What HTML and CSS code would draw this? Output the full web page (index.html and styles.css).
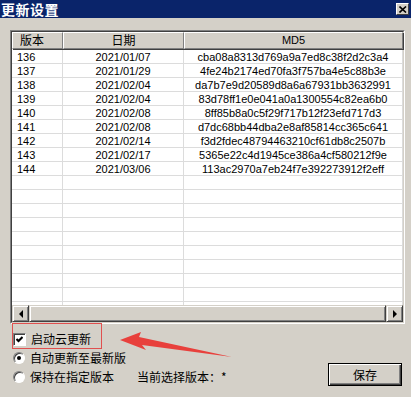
FILE: index.html
```html
<!DOCTYPE html>
<html lang="zh-CN">
<head>
  <meta charset="UTF-8" />
  <title>更新设置</title>
  <link rel="stylesheet" href="styles.css">
</head>
<body>
<div class="window">
  <div class="titlebar">
    <span class="title">更新设置</span>
    <span class="close-btn">
      <svg width="8" height="7" viewBox="0 0 8 7"><path d="M0.5 0.5 L7 6.5 M7 0.5 L0.5 6.5" stroke="#000" stroke-width="1.6"/></svg>
    </span>
  </div>

  <div class="client">
    <div class="listview">
      <div class="lv-inner">
        <div class="lv-header">
          <div class="hcell col-ver">版本</div>
          <div class="hcell col-date">日期</div>
          <div class="hcell col-md5">MD5</div>
        </div>
        <div class="lv-body">
          <div class="row"><div class="cell col-ver">136</div><div class="cell col-date">2021/01/07</div><div class="cell col-md5">cba08a8313d769a9a7ed8c38f2d2c3a4</div></div>
          <div class="row"><div class="cell col-ver">137</div><div class="cell col-date">2021/01/29</div><div class="cell col-md5">4fe24b2174ed70fa3f757ba4e5c88b3e</div></div>
          <div class="row"><div class="cell col-ver">138</div><div class="cell col-date">2021/02/04</div><div class="cell col-md5">da7b7e9d20589d8a6a67931bb3632991</div></div>
          <div class="row"><div class="cell col-ver">139</div><div class="cell col-date">2021/02/04</div><div class="cell col-md5">83d78ff1e0e041a0a1300554c82ea6b0</div></div>
          <div class="row"><div class="cell col-ver">140</div><div class="cell col-date">2021/02/08</div><div class="cell col-md5">8ff85b8a0c5f29f717b12f23efd717d3</div></div>
          <div class="row"><div class="cell col-ver">141</div><div class="cell col-date">2021/02/08</div><div class="cell col-md5">d7dc68bb44dba2e8af85814cc365c641</div></div>
          <div class="row"><div class="cell col-ver">142</div><div class="cell col-date">2021/02/14</div><div class="cell col-md5">f3d2fdec48794463210cf61db8c2507b</div></div>
          <div class="row"><div class="cell col-ver">143</div><div class="cell col-date">2021/02/17</div><div class="cell col-md5">5365e22c4d1945ce386a4cf580212f9e</div></div>
          <div class="row"><div class="cell col-ver">144</div><div class="cell col-date">2021/03/06</div><div class="cell col-md5">113ac2970a7eb24f7e392273912f2eff</div></div>
          <div class="row"><div class="cell col-ver"></div><div class="cell col-date"></div><div class="cell col-md5"></div></div>
          <div class="row"><div class="cell col-ver"></div><div class="cell col-date"></div><div class="cell col-md5"></div></div>
          <div class="row"><div class="cell col-ver"></div><div class="cell col-date"></div><div class="cell col-md5"></div></div>
          <div class="row"><div class="cell col-ver"></div><div class="cell col-date"></div><div class="cell col-md5"></div></div>
          <div class="row"><div class="cell col-ver"></div><div class="cell col-date"></div><div class="cell col-md5"></div></div>
          <div class="row"><div class="cell col-ver"></div><div class="cell col-date"></div><div class="cell col-md5"></div></div>
          <div class="row"><div class="cell col-ver"></div><div class="cell col-date"></div><div class="cell col-md5"></div></div>
          <div class="row"><div class="cell col-ver"></div><div class="cell col-date"></div><div class="cell col-md5"></div></div>
          <div class="row"><div class="cell col-ver"></div><div class="cell col-date"></div><div class="cell col-md5"></div></div>
          <div class="row"><div class="cell col-ver"></div><div class="cell col-date"></div><div class="cell col-md5"></div></div>
        </div>
        <div class="hscroll">
          <span class="sb-btn"><span class="tri-left"></span></span>
          <span class="sb-thumb"></span>
          <span class="sb-btn"><span class="tri-right"></span></span>
        </div>
      </div>
    </div>

    <div class="options">
      <div class="check-row">
        <span class="checkbox">
          <svg width="7" height="7" viewBox="0 0 7 7"><path d="M0.5 3 L2.5 5 L6.5 1" stroke="#000" stroke-width="2" fill="none"/></svg>
        </span>
        <span class="label">启动云更新</span>
      </div>
      <div class="bottom">
        <div class="radios">
          <div class="radio-row"><span class="radio on"></span><span class="label">自动更新至最新版</span></div>
          <div class="radio-row"><span class="radio"></span><span class="label">保持在指定版本</span><span class="current">当前选择版本：*</span></div>
        </div>
        <button class="save-btn">保存</button>
      </div>
    </div>

    <div class="mark-box"></div>
    <svg class="mark-arrow" width="411" height="397" viewBox="0 0 411 397">
      <polygon points="120,340 141,332 139,337 232,357 142,345 146,350" fill="#e8403c"/>
    </svg>
  </div>
</div>
</body>
</html>
```

FILE: styles.css
```css
body {
  margin: 0;
  padding: 0;
  background-color: #d4d0c8;
  font-family: "Noto Sans CJK SC", sans-serif;
  font-size: 12px;
  color: #000;
}
.window {
  width: 411px;
  height: 397px;
  overflow: hidden;
}
.titlebar {
  height: 18px;
  background-color: #0a246a;
  display: flex;
  align-items: center;
  padding: 0 2px 0 1px;
}
.title {
  color: #fff;
  font-weight: bold;
  font-size: 14px;
  line-height: 18px;
  letter-spacing: 0.5px;
}
.close-btn {
  margin-left: auto;
  width: 13px;
  height: 12px;
  box-sizing: border-box;
  background-color: #d4d0c8;
  border-top: 1px solid #fff;
  border-left: 1px solid #fff;
  border-right: 1px solid #404040;
  border-bottom: 1px solid #404040;
  display: flex;
  align-items: center;
  justify-content: center;
}
.client {
  padding: 12px 6px 0 10px;
}

/* list view */
.listview {
  width: 395px;
  height: 294px;
  box-sizing: border-box;
  border-top: 1px solid #808080;
  border-left: 1px solid #808080;
  border-right: 1px solid #fff;
  border-bottom: 1px solid #fff;
}
.lv-inner {
  height: 100%;
  box-sizing: border-box;
  border-top: 1px solid #404040;
  border-left: 1px solid #404040;
  border-right: 1px solid #d4d0c8;
  border-bottom: 1px solid #d4d0c8;
  display: flex;
  flex-direction: column;
  background-color: #fff;
}
.lv-header {
  display: flex;
  height: 17px;
  flex-shrink: 0;
}
.hcell {
  box-sizing: border-box;
  background-color: #d4d0c8;
  border-top: 1px solid #fff;
  border-left: 1px solid #fff;
  border-right: 1px solid #808080;
  border-bottom: 1px solid #808080;
  box-shadow: 1px 1px 0 #404040;
  font-size: 12px;
  line-height: 14px;
  text-align: center;
}
.hcell.col-ver {
  text-align: left;
  padding-left: 7px;
}
.hcell.col-md5 {
  font-family: "Liberation Sans", Arial, sans-serif;
  font-size: 11px;
}
.col-ver {
  width: 51px;
  flex-shrink: 0;
}
.col-date {
  width: 121px;
  flex-shrink: 0;
}
.col-md5 {
  flex: 1;
}
.lv-body {
  flex: 1;
  overflow: hidden;
  padding-top: 1px;
}
.row {
  display: flex;
  height: 14px;
}
.cell {
  box-sizing: border-box;
  height: 14px;
  border-right: 1px solid #dcdcdc;
  border-bottom: 1px solid #dcdcdc;
  font-family: "Liberation Sans", Arial, sans-serif;
  font-size: 11px;
  line-height: 14px;
  text-align: center;
  white-space: nowrap;
  overflow: hidden;
}
.cell.col-ver {
  text-align: left;
  padding-left: 5px;
}

/* scroll bar */
.hscroll {
  display: flex;
  height: 17px;
  flex-shrink: 0;
  background-color: #e8e6e0;
}
.sb-btn, .sb-thumb {
  box-sizing: border-box;
  height: 17px;
  background-color: #d4d0c8;
  border-top: 1px solid #d4d0c8;
  border-left: 1px solid #d4d0c8;
  border-right: 1px solid #404040;
  border-bottom: 1px solid #404040;
  box-shadow: inset 1px 1px 0 #fff, inset -1px -1px 0 #808080;
}
.sb-btn {
  width: 17px;
  display: flex;
  align-items: center;
  justify-content: center;
}
.sb-thumb {
  flex: 1;
}
.tri-left {
  width: 0;
  height: 0;
  border-top: 4px solid transparent;
  border-bottom: 4px solid transparent;
  border-right: 4px solid #000;
}
.tri-right {
  width: 0;
  height: 0;
  border-top: 4px solid transparent;
  border-bottom: 4px solid transparent;
  border-left: 4px solid #000;
}

/* options */
.options {
  padding-left: 3px;
  padding-right: 3px;
}
.check-row {
  display: flex;
  align-items: center;
  height: 18px;
  margin-top: 6px;
}
.checkbox {
  width: 13px;
  height: 13px;
  box-sizing: border-box;
  background-color: #fff;
  border-top: 1px solid #808080;
  border-left: 1px solid #808080;
  border-right: 1px solid #fff;
  border-bottom: 1px solid #fff;
  box-shadow: inset 1px 1px 0 #404040;
  display: flex;
  align-items: center;
  justify-content: center;
  margin-right: 5px;
}
.label {
  line-height: 18px;
}
.bottom {
  display: flex;
  align-items: flex-end;
}
.radio-row {
  display: flex;
  align-items: center;
  height: 19px;
}
.radio {
  width: 12px;
  height: 12px;
  box-sizing: border-box;
  border-radius: 50%;
  background-color: #fff;
  border: 1px solid #808080;
  border-right-color: #fff;
  border-bottom-color: #fff;
  box-shadow: inset 1px 1px 0 #404040;
  margin-right: 5px;
  display: flex;
  align-items: center;
  justify-content: center;
}
.radio.on::after {
  content: "";
  width: 4px;
  height: 4px;
  border-radius: 50%;
  background-color: #000;
}
.current {
  margin-left: 23px;
}
.save-btn {
  margin-left: auto;
  width: 74px;
  height: 23px;
  box-sizing: border-box;
  background-color: #d4d0c8;
  border: 1px solid #000;
  box-shadow: inset 1px 1px 0 #fff, inset -1px -1px 0 #404040, inset -2px -2px 0 #808080;
  font-family: "Noto Sans CJK SC", sans-serif;
  font-size: 12px;
  padding: 0;
  color: #000;
}

/* annotation */
.mark-box {
  position: absolute;
  left: 12px;
  top: 323px;
  width: 90px;
  height: 26px;
  box-sizing: border-box;
  border: 1px solid #e0504f;
}
.mark-arrow {
  position: absolute;
  left: 0;
  top: 0;
  pointer-events: none;
}
```
